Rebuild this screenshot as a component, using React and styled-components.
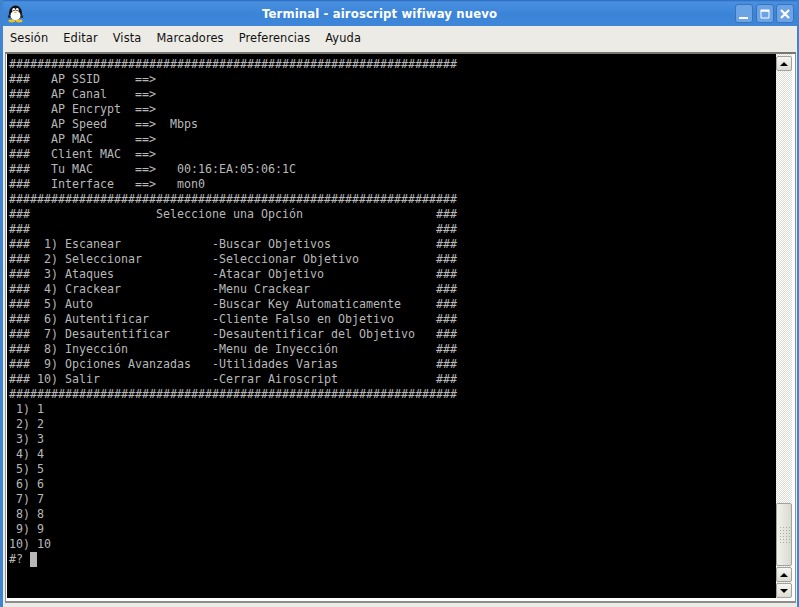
import React from 'react';
import styled, { createGlobalStyle } from 'styled-components';

const GlobalStyle = createGlobalStyle`
  html, body {
    margin: 0;
    padding: 0;
    background: #ecebe5;
  }
`;

const Window = styled.div`
  width: 799px;
  height: 607px;
  box-sizing: border-box;
  display: flex;
  flex-direction: column;
  overflow: hidden;
  background: #ecebe5;
  border-left: 3px solid #3f83d1;
  border-right: 2px solid #3f83d1;
`;

const TitleBar = styled.div`
  height: 25px;
  margin: 0 -2px 0 -3px;
  flex: none;
  display: flex;
  align-items: center;
  padding: 1px 5px 0 7px;
  background: linear-gradient(#2a69bb 0, #4a90e0 2px, #3a84d8 14px, #3f86d8 100%);
`;

const Title = styled.div`
  flex: 1;
  text-align: center;
  color: #fff;
  font: bold 11.7px "DejaVu Sans", sans-serif;
  letter-spacing: 0.12px;
`;

const WinButtons = styled.div`
  display: flex;
  gap: 2.5px;
`;

const WinButton = styled.div`
  width: 18px;
  height: 19px;
  box-sizing: border-box;
  border: 1px solid #3a72bb;
  border-radius: 3px;
  background: #6ba3e4;
  display: flex;
  align-items: center;
  justify-content: center;
`;

const MenuBar = styled.div`
  height: 26px;
  flex: none;
  display: flex;
  align-items: center;
  gap: 15px;
  padding: 0 0 2px 7px;
  box-sizing: border-box;
  font: 11.4px "DejaVu Sans", sans-serif;
  letter-spacing: 0.12px;
  color: #111;
`;

const TerminalFrame = styled.div`
  width: 791px;
  height: 551px;
  margin-left: 2px;
  box-sizing: border-box;
  flex: none;
  display: flex;
  border: 1px solid #8e8d88;
  border-top: 2px solid #77766f;
  border-bottom: 2px solid #8e8d88;
  padding: 0 3px 3px 1px;
  background: #fff;
`;

const Screen = styled.pre`
  flex: 1;
  margin: 0;
  padding: 3px 0 0 2px;
  background: #000;
  color: #b8b8b8;
  font: 11.63px/15px "DejaVu Sans Mono", monospace;
  overflow: hidden;
`;

const Cursor = styled.span`
  display: inline-block;
  width: 7px;
  height: 15px;
  vertical-align: top;
  background: #b8b8b8;
`;

const ScrollBar = styled.div`
  width: 16px;
  flex: none;
  display: flex;
  flex-direction: column;
  padding-top: 2px;
  box-sizing: border-box;
  background-color: #fff;
  background-image: repeating-conic-gradient(#dcdbd5 0 25%, #fff 0 50%);
  background-size: 2px 2px;
`;

const ScrollButton = styled.div`
  height: 15px;
  margin-bottom: ${(p) => p.$gap || 0}px;
  box-sizing: border-box;
  flex: none;
  border: 1px solid #a3a29c;
  border-radius: 2px;
  background: linear-gradient(#f6f5f1, #dedcd4);
  display: flex;
  align-items: center;
  justify-content: center;
`;

const Arrow = styled.div`
  width: 0;
  height: 0;
  border-left: 4px solid transparent;
  border-right: 4px solid transparent;
  ${(p) => (p.$down ? 'border-top: 4px solid #000;' : 'border-bottom: 4px solid #000;')}
`;

const ScrollSpace = styled.div`
  flex: 1;
`;

const Thumb = styled.div`
  height: 63px;
  flex: none;
  box-sizing: border-box;
  border: 1px solid #a3a29c;
  border-radius: 2px;
  margin-bottom: 1px;
  background: linear-gradient(90deg, #f2f1ec, #dbd9d1);
  display: flex;
  align-items: center;
  justify-content: center;
`;

const Grip = styled.div`
  width: 11px;
  height: 18px;
  background-image: radial-gradient(circle, #a9a8a2 0.8px, transparent 1px);
  background-size: 3px 3px;
`;

const hashes = '#'.repeat(64);

const lines = `${hashes}
###   AP SSID     ==>
###   AP Canal    ==>
###   AP Encrypt  ==>
###   AP Speed    ==>  Mbps
###   AP MAC      ==>
###   Client MAC  ==>
###   Tu MAC      ==>   00:16:EA:05:06:1C
###   Interface   ==>   mon0
${hashes}
###                  Seleccione una Opción                   ###
###                                                          ###
###  1) Escanear             -Buscar Objetivos               ###
###  2) Seleccionar          -Seleccionar Objetivo           ###
###  3) Ataques              -Atacar Objetivo                ###
###  4) Crackear             -Menu Crackear                  ###
###  5) Auto                 -Buscar Key Automaticamente     ###
###  6) Autentificar         -Cliente Falso en Objetivo      ###
###  7) Desautentificar      -Desautentificar del Objetivo   ###
###  8) Inyección            -Menu de Inyección              ###
###  9) Opciones Avanzadas   -Utilidades Varias              ###
### 10) Salir                -Cerrar Airoscript              ###
${hashes}
 1) 1
 2) 2
 3) 3
 4) 4
 5) 5
 6) 6
 7) 7
 8) 8
 9) 9
10) 10
#? `;

const menus = ['Sesión', 'Editar', 'Vista', 'Marcadores', 'Preferencias', 'Ayuda'];

const Penguin = () => (
  <svg width="17" height="18" viewBox="0 0 17 18">
    <ellipse cx="8.5" cy="8" rx="6.5" ry="7.5" fill="#111" />
    <ellipse cx="8.5" cy="10.5" rx="5" ry="5" fill="#fff" />
    <ellipse cx="6.8" cy="5" rx="1.6" ry="2" fill="#fff" />
    <ellipse cx="10.2" cy="5" rx="1.6" ry="2" fill="#fff" />
    <circle cx="7" cy="5.4" r="0.7" fill="#000" />
    <circle cx="10" cy="5.4" r="0.7" fill="#000" />
    <path d="M6.5 6.8 L10.5 6.8 L8.5 8.6 Z" fill="#f2b318" />
    <path d="M2.4 8 L0.6 12.5 L3 13 Z M14.6 8 L16.4 12.5 L14 13 Z" fill="#222" />
    <ellipse cx="4.8" cy="16" rx="3.4" ry="1.4" fill="#f2c318" />
    <ellipse cx="12.2" cy="16" rx="3.4" ry="1.4" fill="#f2c318" />
  </svg>
);

const App = () => (
  <>
    <GlobalStyle />
    <Window>
      <TitleBar>
        <Penguin />
        <Title>Terminal - airoscript wifiway nuevo</Title>
        <WinButtons>
          <WinButton>
            <svg width="12" height="12" viewBox="0 0 12 12">
              <rect x="1" y="9" width="9" height="2" fill="#fff" />
            </svg>
          </WinButton>
          <WinButton>
            <svg width="12" height="12" viewBox="0 0 12 12">
              <path d="M2 3H10V10H2Z" fill="none" stroke="#fff" strokeWidth="1" />
              <rect x="1.5" y="1.5" width="9" height="2" fill="#fff" />
            </svg>
          </WinButton>
          <WinButton>
            <svg width="12" height="12" viewBox="0 0 12 12">
              <path d="M2 2L10 10M10 2L2 10" stroke="#fff" strokeWidth="2.2" />
            </svg>
          </WinButton>
        </WinButtons>
      </TitleBar>
      <MenuBar>
        {menus.map((m) => (
          <span key={m}>{m}</span>
        ))}
      </MenuBar>
      <TerminalFrame>
        <Screen>
          {lines}
          <Cursor />
        </Screen>
        <ScrollBar>
          <ScrollButton>
            <Arrow />
          </ScrollButton>
          <ScrollSpace />
          <Thumb>
            <Grip />
          </Thumb>
          <ScrollButton $gap={1}>
            <Arrow />
          </ScrollButton>
          <ScrollButton>
            <Arrow $down />
          </ScrollButton>
        </ScrollBar>
      </TerminalFrame>
    </Window>
  </>
);

export default App;
